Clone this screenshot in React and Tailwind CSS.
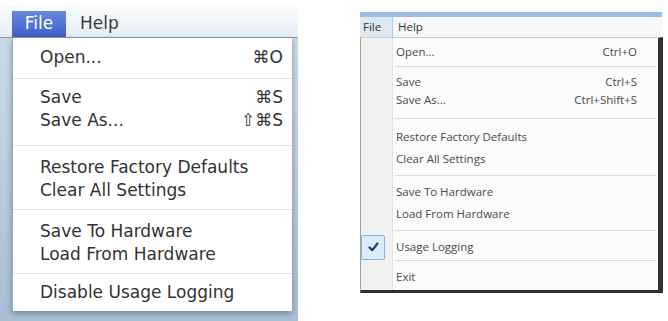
import React from "react";

const MAC_GROUPS = [
  { pt: "pt-[8px]", pb: "pb-[9px]", rows: [{ label: "Open...", key: "⌘O" }] },
  {
    pt: "pt-[7px]",
    pb: "pb-[13px]",
    rows: [
      { label: "Save", key: "⌘S" },
      { label: "Save As...", key: "⇧⌘S" },
    ],
  },
  {
    pt: "pt-[10px]",
    pb: "pb-[7px]",
    rows: [{ label: "Restore Factory Defaults" }, { label: "Clear All Settings" }],
  },
  {
    pt: "pt-[10px]",
    pb: "pb-[7px]",
    rows: [{ label: "Save To Hardware" }, { label: "Load From Hardware" }],
  },
  { pt: "pt-[7px]", pb: "pb-[6px]", rows: [{ label: "Disable Usage Logging" }] },
];

const WIN_GROUPS = [
  { pt: "pt-[3px]", pb: "pb-[3px]", h: "h-[22px]", rows: [{ label: "Open...", key: "Ctrl+O" }] },
  {
    pt: "pt-[6px]",
    pb: "pb-[9px]",
    h: "h-[18px]",
    rows: [
      { label: "Save", key: "Ctrl+S" },
      { label: "Save As...", key: "Ctrl+Shift+S" },
    ],
  },
  {
    pt: "pt-[7px]",
    pb: "pb-[5px]",
    h: "h-[22px]",
    rows: [{ label: "Restore Factory Defaults" }, { label: "Clear All Settings" }],
  },
  {
    pt: "pt-[5px]",
    pb: "pb-[5px]",
    h: "h-[22px]",
    rows: [{ label: "Save To Hardware" }, { label: "Load From Hardware" }],
  },
  { pt: "pt-[3px]", pb: "pb-0", h: "h-[26px]", rows: [{ label: "Usage Logging", checked: true }] },
  { pt: "pt-[3px]", pb: "pb-0", h: "h-[26px]", rows: [{ label: "Exit" }] },
];

function MacMenu() {
  return (
    <div className="w-[298px] h-full flex flex-col bg-gradient-to-b from-[#d2deea] to-[#a9bed3] font-['DejaVu_Sans',sans-serif]">
      {/* Menu bar */}
      <div className="h-[38px] shrink-0 flex items-end pl-[12px] bg-gradient-to-b from-white to-[#e6eef6] border-b border-[#8f99a4]">
        <div className="h-[26px] w-[54px] flex items-center justify-center text-[17px] text-white bg-gradient-to-b from-[#6a89dd] to-[#3c60c9]">
          File
        </div>
        <div className="h-[26px] ml-[14px] flex items-center text-[17px] text-[#3a3a3a]">
          Help
        </div>
      </div>

      {/* Dropdown */}
      <div className="ml-[12px] w-[280px] h-[273px] bg-white border-l border-[#9eabb8] shadow-[0_2px_6px_rgba(40,60,90,0.45)] text-[17px] text-[#333]">
        {MAC_GROUPS.map((group, gi) => (
          <div key={gi} className={gi > 0 ? "border-t border-[#e3e3e3]" : ""}>
            <div className={`${group.pt} ${group.pb}`}>
              {group.rows.map((row) => (
                <div key={row.label} className="h-[23px] flex items-center pl-[27px] pr-[9px]">
                  <span className="flex-1 leading-none">{row.label}</span>
                  {row.key && <span className="leading-none">{row.key}</span>}
                </div>
              ))}
            </div>
          </div>
        ))}
      </div>
    </div>
  );
}

function CheckBox() {
  return (
    <div className="w-[24px] h-[25px] flex items-center justify-center bg-[#dcecfa] border border-[#86b6dc] rounded-[2px]">
      <svg width="11" height="10" viewBox="0 0 11 10">
        <path d="M1.5 5.5 L4.2 8.2 L9.5 1.5" fill="none" stroke="#1f3f73" strokeWidth="2.2" strokeLinecap="round" strokeLinejoin="round" />
      </svg>
    </div>
  );
}

function WinMenu() {
  return (
    <div className="w-[308px] h-full flex flex-col font-['Open_Sans',sans-serif] text-[11.5px] text-[#4a4a4a]">
      <div className="h-[12px] shrink-0" />
      <div className="h-[5px] w-[302px] shrink-0 bg-[#9dbde0]" />

      {/* Menu bar */}
      <div className="h-[20px] w-[302px] shrink-0 flex bg-[#f7f8fa]">
        <div className="w-[33px] flex items-center pl-[3px] bg-[#dce8f4] border-r border-[#b3cbe2] text-[#333]">
          File
        </div>
        <div className="ml-[5px] flex items-center text-[#333]">Help</div>
      </div>

      {/* Dropdown */}
      <div className="w-[303px] h-[256px] border-t border-[#cfcfcf] border-l border-l-[#a0a0a0] border-r-[5px] border-r-[#333] border-b-[3px] border-b-[#2f2f2f] bg-[linear-gradient(to_right,#f1f1f1_31px,#e2e3e3_31px,#e2e3e3_32px,#ffffff_32px,#ffffff_33px,#fbfbfb_33px)]">
        {WIN_GROUPS.map((group, gi) => (
          <div key={gi}>
            {gi > 0 && <div className="ml-[34px] mr-[2px] h-px bg-[#dadada]" />}
            <div className={`${group.pt} ${group.pb}`}>
              {group.rows.map((row) => (
                <div key={row.label} className={`${group.h} flex items-center pr-[21px]`}>
                  <div className="w-[33px] h-full shrink-0 flex items-center">
                    {row.checked && <CheckBox />}
                  </div>
                  <span className="flex-1 pl-[2px] leading-none">{row.label}</span>
                  {row.key && <span className="leading-none">{row.key}</span>}
                </div>
              ))}
            </div>
          </div>
        ))}
      </div>
    </div>
  );
}

export default function App() {
  return (
    <div className="w-[668px] h-[321px] bg-white flex overflow-hidden">
      <MacMenu />
      <div className="w-[62px] shrink-0" />
      <WinMenu />
    </div>
  );
}
